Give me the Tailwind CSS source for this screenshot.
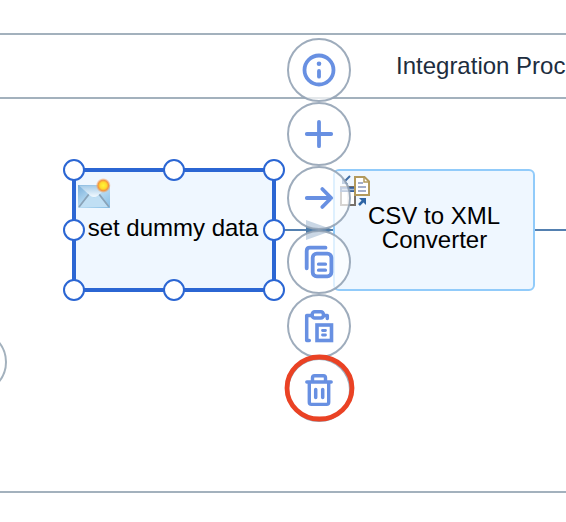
<!DOCTYPE html>
<html lang="en">
<head>
<meta charset="utf-8">
<title>Integration flow editor</title>
<script src="https://cdn.jsdelivr.net/npm/@tailwindcss/browser@4"></script>
</head>
<body class="bg-white overflow-hidden">
<main class="relative w-[566px] h-[522px] overflow-hidden bg-white font-['Liberation_Sans',Arial,sans-serif] text-[24px] leading-[24px] text-black">
  <!-- pool -->
  <section class="absolute left-0 top-[33px] w-full h-[460px] border-y-2 border-[#a3b1bd]">
    <header class="h-[64px] border-b-2 border-[#a3b1bd] pl-[396px] pt-[19px] whitespace-nowrap text-[#1d2d3e]">Integration Proc</header>
  </section>
  <div class="absolute left-[-57px] top-[330px] size-[64px] rounded-full border-2 border-[#a3b1bd]"></div>

  <!-- sequence flows -->
  <svg class="absolute inset-0" width="566" height="522" viewBox="0 0 566 522">
    <path d="M274 230H334M534 230H566" stroke="#5480b0" stroke-width="2"/>
    <path d="M306 220L334 230L306 240Z" fill="#4d7ba8"/>
  </svg>

  <!-- steps -->
  <div class="absolute left-[72px] top-[168px] w-[204px] h-[124px] border-4 border-[#2b66d3] bg-[#eff7ff] flex items-start justify-center pt-[44px] pr-[2px] whitespace-nowrap">set dummy data</div>
  <div class="absolute left-[333px] top-[169px] w-[202px] h-[122px] rounded-[6px] border-2 border-[#91cbfa] bg-[#eff7ff] text-center pt-[33px]">CSV to XML<br><span class="pl-px">Converter</span></div>

  <svg class="absolute inset-0" width="566" height="522" viewBox="0 0 566 522" fill="none">
    <defs>
      <linearGradient id="env" x1="0" y1="0" x2="1" y2="1"><stop offset="0" stop-color="#77add9"/><stop offset=".5" stop-color="#b9dcf3"/><stop offset="1" stop-color="#86bde5"/></linearGradient>
      <linearGradient id="flap" x1="0" y1="0" x2="0" y2="1"><stop offset="0" stop-color="#a5cbe8"/><stop offset="1" stop-color="#f3faff"/></linearGradient>
      <radialGradient id="sun"><stop offset="0" stop-color="#fff53a"/><stop offset=".45" stop-color="#ffda2b"/><stop offset=".7" stop-color="#f3943f"/><stop offset="1" stop-color="#f3a36a" stop-opacity="0"/></radialGradient>
    </defs>
    <!-- message icon -->
    <path d="M78 185H110V208H78Z" fill="url(#env)"/>
    <path d="M79 207L90 195L94 198L98 195L109 207Z" fill="#c0dff4"/>
    <path d="M79 207L89 194M109 207L99 194" stroke="#8aa3b8" stroke-width="1.800"/>
    <path d="M79 185.500H109L98 195.500Q94 198.500 90 195.500Z" fill="url(#flap)"/>
    <circle cx="103.300" cy="185.500" r="7.500" fill="url(#sun)"/>
    <!-- converter icon -->
    <rect x="341" y="187" width="14" height="18" fill="#fff" stroke="#77716a" stroke-width="2"/>
    <path d="M340 189.500H356" stroke="#365f9b" stroke-width="5"/>
    <path d="M342 189.500H354" stroke="#a2bddd" stroke-width="1.500"/>
    <path d="M348 192V204" stroke="#bcbcc5" stroke-width="1"/>
    <path d="M355 177H364.500L369 181.500V195H355Z" fill="#fff" stroke="#b39a5c" stroke-width="2"/>
    <path d="M364 177V182H369" stroke="#b39a5c" stroke-width="1.500"/>
    <path d="M358 183H363M358 187H366M358 191H366" stroke="#8594b9" stroke-width="1.500"/>
    <path d="M350 176L344 182" stroke="#3d6ba5" stroke-width="2"/>
    <path d="M342 178V184H348Z" fill="#3d6ba5"/>
    <path d="M359 205L364 200" stroke="#2f65a5" stroke-width="2.500"/>
    <path d="M359 198H366V205Z" fill="#2f65a5"/>
    <!-- resize handles -->
    <g fill="#fff" stroke="#2b66d3" stroke-width="2">
      <circle cx="74" cy="170" r="10"/><circle cx="174" cy="170" r="10"/><circle cx="274" cy="170" r="10"/>
      <circle cx="74" cy="230" r="10"/><circle cx="274" cy="230" r="10"/>
      <circle cx="74" cy="290" r="10"/><circle cx="174" cy="290" r="10"/><circle cx="274" cy="290" r="10"/>
    </g>
    <!-- context buttons -->
    <g fill="#fff" fill-opacity=".7" stroke="#94a3b5" stroke-opacity=".9" stroke-width="2">
      <circle cx="319" cy="70" r="31"/><circle cx="319" cy="134" r="31"/><circle cx="319" cy="198" r="31"/>
      <circle cx="319" cy="262" r="31"/><circle cx="319" cy="326" r="31"/><circle cx="319" cy="390" r="31"/>
    </g>
    <g stroke="#6890e2" stroke-width="3.800" stroke-linecap="round" stroke-linejoin="round">
      <circle cx="319" cy="70" r="14.500"/>
      <path d="M319 71V76.700"/>
      <circle cx="319" cy="63.800" r="2.300" fill="#6890e2" stroke="none"/>
      <path d="M306.800 134H331.200M319 121.800V146.200"/>
      <path d="M306.800 198H331M322.300 189L331.200 198L322.300 207"/>
      <path d="M306.700 268.300V251Q306.700 247.700 310 247.700H325.500"/>
      <rect x="312.700" y="253.700" width="18.700" height="22.600" rx="4"/>
      <path d="M318.500 264.200H325.500M318.500 270.200H325.500" stroke-width="3.200"/>
      <path d="M309.300 340.500H306.700V315.500H312M324 315.500H327.300V318.500" stroke-width="3.500"/>
      <rect x="312.200" y="311.700" width="11.200" height="6.300" rx="2.500" stroke-width="3.500"/>
      <rect x="317" y="325" width="14.500" height="15.500" stroke-width="3.600" stroke-linejoin="miter"/>
      <path d="M322.500 330.500H325.500M322.500 335H325.500" stroke-width="2.800"/>
      <path d="M306.800 382H331.200M309.300 382V402.300Q309.300 404.400 311.400 404.400H326.600Q328.700 404.400 328.700 402.300V382M312.500 381V377.800Q312.500 375.700 314.600 375.700H323.400Q325.500 375.700 325.500 377.800V381" stroke-width="3.400"/>
      <path d="M315.700 389.500V397.500M322.700 389.500V397.500" stroke-width="3.500"/>
    </g>
    <!-- highlight -->
    <ellipse cx="319.500" cy="388" rx="32.500" ry="31" stroke="#ea4224" stroke-width="4.800"/>
  </svg>
</main>
</body>
</html>
